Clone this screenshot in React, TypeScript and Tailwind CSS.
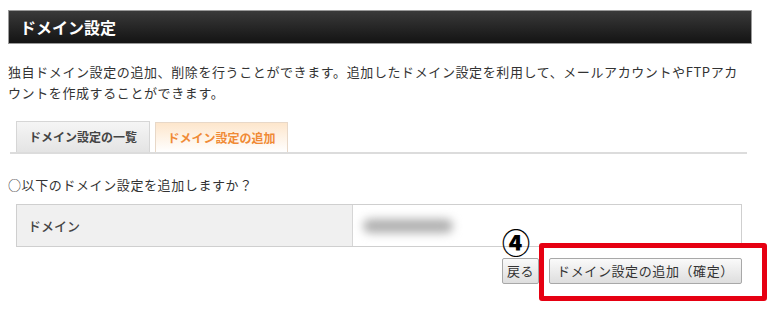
import React from "react";

export default function App() {
  const font = { fontFamily: '"Noto Sans CJK JP", "Noto Sans", sans-serif' };
  return (
    <div className="relative w-[780px] h-[313px] bg-white text-[#333] overflow-hidden" style={font}>
      <div className="pt-[10px] pl-[8px] pr-[28px]">
        <div className="h-[34px] flex items-center pl-[11px] border border-[#9a9a9a] bg-linear-to-b from-[#3a3a3a] to-[#141414]">
          <span className="text-white font-bold text-[16px] leading-none">ドメイン設定</span>
        </div>
        <p className="mt-[17px] text-[13px] leading-[21px] tracking-[0.6px]">
          独自ドメイン設定の追加、削除を行うことができます。追加したドメイン設定を利用して、メールアカウントやFTPアカ
          <br />
          ウントを作成することができます。
        </p>
      </div>
      <div className="mt-[18px] ml-[10px] w-[737px] border-b-2 border-[#dcdcdc] flex items-end gap-[5px] pl-[6px]">
        <div className="w-[134px] h-[31px] flex items-center justify-center border border-b-0 border-[#d6d6d6] bg-linear-to-b from-[#f5f5f5] to-[#e4e4e4] text-[12px] font-bold text-[#444]">
          ドメイン設定の一覧
        </div>
        <div className="w-[133px] h-[30px] flex items-center justify-center border border-b-0 border-[#e8d8c8] bg-linear-to-b from-[#fde6cc] to-white text-[12px] font-bold text-[#f08a35]">
          ドメイン設定の追加
        </div>
      </div>
      <p className="mt-[21px] ml-[8px] text-[13px] leading-[20px] tracking-[0.6px]">○以下のドメイン設定を追加しますか？</p>
      <div className="mt-[9px] ml-[16px] w-[726px] h-[43px] flex border border-[#cfcfcf]">
        <div className="w-[336px] bg-[#f0f0f0] border-r border-[#d6d6d6] flex items-center pl-[11px] text-[13px] font-medium text-[#444]">
          ドメイン
        </div>
        <div className="flex-1 flex items-center pl-[10px]">
          <div className="w-[90px] h-[14px] rounded-full bg-[#b0b0b0] blur-[5px]" />
        </div>
      </div>
      <div className="mt-[11px] w-[742px] flex justify-end gap-[10px]">
        <button className="h-[26px] px-[4px] border border-[#a8a8a8] rounded-[2px] bg-linear-to-b from-[#fafafa] to-[#dedede] text-[13px] text-[#333] tracking-[0.5px]">
          戻る
        </button>
        <button className="w-[193px] h-[26px] border border-[#a8a8a8] rounded-[2px] bg-linear-to-b from-[#fafafa] to-[#dedede] text-[13px] text-[#333] tracking-[0.6px]">
          ドメイン設定の追加（確定）
        </button>
      </div>
      <div className="absolute left-[539px] top-[243px] w-[228px] h-[58px] border-[5px] border-[#e60012] rounded-[3px]" />
      <div className="absolute left-[502px] top-[228px] text-[28px] font-black leading-none text-black">④</div>
    </div>
  );
}
